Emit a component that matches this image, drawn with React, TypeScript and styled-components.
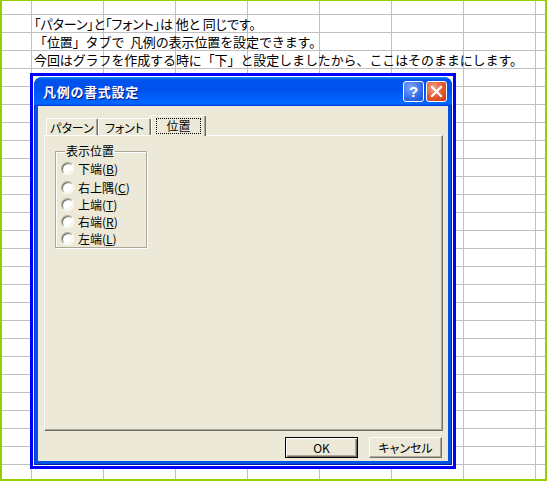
import React from 'react';
import styled, { createGlobalStyle, css } from 'styled-components';

const GlobalStyle = createGlobalStyle`
  html, body {
    margin: 0;
    padding: 0;
    background: #fff;
  }
  body {
    font-family: "Noto Sans CJK JP", "Noto Sans", sans-serif;
  }
`;

const Sheet = styled.div`
  width: 547px;
  height: 481px;
  box-sizing: border-box;
  border: 2px solid #99cc00;
  border-top-width: 1px;
  background: #fff;
`;

// spreadsheet cells: 72px columns, 18px rows
const Grid = styled.div`
  height: 100%;
  box-sizing: border-box;
  padding: 14px 0 0 28px;
  background-image:
    linear-gradient(to right, #c0c0c0 1px, transparent 1px),
    linear-gradient(to bottom, #c0c0c0 1px, transparent 1px);
  background-size: 72px 100%, 100% 18px;
  background-position: 29px 0, 0 13px;
`;

const NoteLine = styled.div<{ $tight?: boolean }>`
  height: 18px;
  line-height: 18px;
  padding-left: 4px;
  font-size: 13px;
  letter-spacing: -0.1px;
  color: #000;
  white-space: pre;
  ${p => p.$tight && css`font-feature-settings: "palt";`}
`;

const Highlight = styled.div`
  margin-top: 4px;
  width: 426px;
  box-sizing: border-box;
  border: 3px solid #0000ff;
  padding: 1px;
  background: #fff;
`;

const Window = styled.div`
  height: 388px;
  display: flex;
  flex-direction: column;
  border-radius: 8px 8px 0 0;
  overflow: hidden;
  background: #0054e3;
`;

const TitleBar = styled.div`
  height: 29px;
  flex: none;
  display: flex;
  align-items: center;
  gap: 2px;
  padding: 0 5px 0 9px;
  background: linear-gradient(180deg, #0997ff, #0053ee 8%, #0050ee 40%, #06f 88%, #06f 93%, #005bff 95%, #003dd7 96%, #003dd7);
`;

const Title = styled.div`
  flex: 1;
  color: #fff;
  font-size: 13px;
  font-weight: bold;
  letter-spacing: 0.7px;
  text-shadow: 1px 1px #0a1883;
`;

const CaptionButton = styled.div<{ $close?: boolean }>`
  width: 21px;
  height: 21px;
  box-sizing: border-box;
  border: 1px solid #fff;
  border-radius: 3px;
  display: flex;
  align-items: center;
  justify-content: center;
  color: #fff;
  font-family: "Liberation Sans", sans-serif;
  font-weight: bold;
  font-size: 15px;
  background: ${p =>
    p.$close
      ? 'radial-gradient(circle at 35% 30%, #f0a285, #e2582e 55%, #c53a16)'
      : 'radial-gradient(circle at 35% 30%, #7fa8fb, #3a70ec 55%, #1a4ad0)'};
`;

const Frame = styled.div`
  flex: 1;
  display: flex;
  padding: 0 4px 4px;
  box-shadow: inset 1px 0 #0831d9, inset -1px -1px #001ea0;
`;

const Body = styled.div`
  flex: 1;
  display: flex;
  flex-direction: column;
  padding: 9px 5px 3px 6px;
  background: #ece9d8;
`;

const TabRow = styled.div`
  height: 20px;
  display: flex;
  align-items: flex-end;
  padding-left: 2px;
`;

const Tab = styled.div<{ $active?: boolean; $w: number }>`
  width: ${p => p.$w}px;
  height: 17px;
  box-sizing: border-box;
  display: flex;
  align-items: center;
  justify-content: center;
  font-size: 12px;
  font-feature-settings: "palt";
  color: #000;
  background: #ece9d8;
  border-top: 1px solid #fff;
  border-left: 1px solid #fff;
  border-right: 1px solid #716f64;
  border-radius: 2px 2px 0 0;
  box-shadow: inset -1px 0 #aca899;
  ${p =>
    p.$active &&
    css`
      height: 21px;
      margin-bottom: -1px;
      position: relative;
      z-index: 1;
      padding-bottom: 1px;
    `}
`;

const Focus = styled.span`
  padding: 0 9px;
  line-height: 14px;
  outline: 1px dotted #000;
`;

const Panel = styled.div`
  flex: 1;
  padding: 8px 0 0 10px;
  border-top: 1px solid #fff;
  border-left: 1px solid #fff;
  border-right: 1px solid #716f64;
  border-bottom: 1px solid #716f64;
  box-shadow: inset -1px -1px #aca899;
`;

const GroupBox = styled.fieldset`
  width: 92px;
  height: 104px;
  box-sizing: border-box;
  margin: 0;
  padding: 2px 0 0 5px;
  border: 1px solid #aca899;
  box-shadow: 1px 1px 0 #fff, inset 1px 1px 0 #fff;
`;

const Legend = styled.legend`
  margin-left: 4px;
  padding: 0 1px;
  font-size: 12px;
  line-height: 14px;
  color: #000;
`;

const RadioRow = styled.label<{ $gap: number }>`
  height: 17px;
  margin-bottom: ${p => p.$gap}px;
  display: flex;
  align-items: center;
  gap: 4px;
  font-size: 12px;
  font-feature-settings: "palt";
  color: #000;
`;

const RadioDot = styled.span`
  width: 13px;
  height: 13px;
  box-sizing: border-box;
  border-radius: 50%;
  background: #fff;
  border: 1px solid;
  border-color: #aca899 #fff #fff #aca899;
  box-shadow: inset 1px 1px #716f64, inset -1px -1px #f1efe2;
`;

const ButtonRow = styled.div`
  display: flex;
  justify-content: flex-end;
  gap: 11px;
  margin: 6px 1px 0 0;
`;

const PushButton = styled.button<{ $default?: boolean }>`
  width: 73px;
  height: 21px;
  padding: 0;
  font-family: "Noto Sans CJK JP", sans-serif;
  font-size: 12px;
  font-feature-settings: "palt";
  color: #000;
  background: #ece9d8;
  border: 1px solid;
  border-color: #fff #716f64 #716f64 #fff;
  box-shadow: inset -1px -1px #aca899;
  ${p =>
    p.$default &&
    css`
      border-color: #000;
      box-shadow: inset 1px 1px #fff, inset -1px -1px #716f64, inset -2px -2px #aca899;
    `}
`;

const positions = [
  { text: '下端', key: 'B', gap: 2 },
  { text: '右上隅', key: 'C', gap: 0 },
  { text: '上端', key: 'T', gap: 0 },
  { text: '右端', key: 'R', gap: 0 },
  { text: '左端', key: 'L', gap: 0 },
];

export default function App() {
  return (
    <>
      <GlobalStyle />
      <Sheet>
        <Grid>
          <NoteLine $tight>「パターン」と「フォント」は 他と 同じです。</NoteLine>
          <NoteLine>「位置」タブで  凡例の表示位置を設定できます。</NoteLine>
          <NoteLine>今回はグラフを作成する時に「下」と設定しましたから、ここはそのままにします。</NoteLine>
          <Highlight>
            <Window>
              <TitleBar>
                <Title>凡例の書式設定</Title>
                <CaptionButton>?</CaptionButton>
                <CaptionButton $close>
                  <svg width="13" height="13" viewBox="0 0 13 13">
                    <path d="M2 2L11 11M11 2L2 11" stroke="#fff" strokeWidth="2.2" strokeLinecap="square" />
                  </svg>
                </CaptionButton>
              </TitleBar>
              <Frame>
                <Body>
                  <TabRow>
                    <Tab $w={52}>パターン</Tab>
                    <Tab $w={53}>フォント</Tab>
                    <Tab $w={55} $active>
                      <Focus>位置</Focus>
                    </Tab>
                  </TabRow>
                  <Panel>
                    <GroupBox>
                      <Legend>表示位置</Legend>
                      {positions.map(p => (
                        <RadioRow key={p.key} $gap={p.gap}>
                          <RadioDot />
                          <span>
                            {p.text}(<u>{p.key}</u>)
                          </span>
                        </RadioRow>
                      ))}
                    </GroupBox>
                  </Panel>
                  <ButtonRow>
                    <PushButton $default>OK</PushButton>
                    <PushButton>キャンセル</PushButton>
                  </ButtonRow>
                </Body>
              </Frame>
            </Window>
          </Highlight>
        </Grid>
      </Sheet>
    </>
  );
}
